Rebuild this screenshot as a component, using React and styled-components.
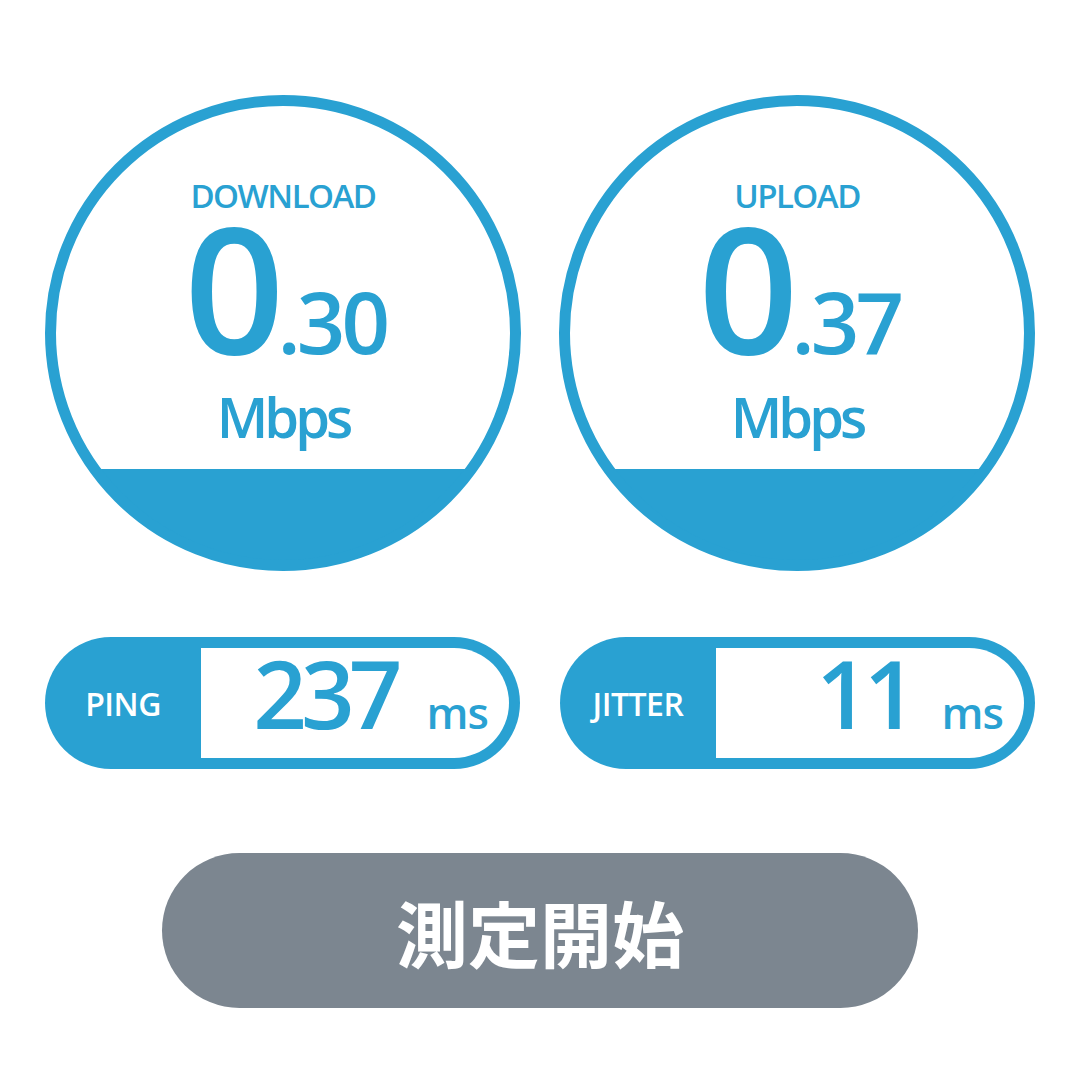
import styled, { createGlobalStyle } from "styled-components";

const BLUE = "#29a1d2";

const GlobalStyle = createGlobalStyle`
    html, body {
        margin: 0;
        padding: 0;
        background: #ffffff;
        font-family: "Open Sans", "Noto Sans", sans-serif;
    }
`;

const gauges = [
    { label: "DOWNLOAD", whole: "0", fraction: ".30" },
    { label: "UPLOAD", whole: "0", fraction: ".37" },
];

const stats = [
    { label: "PING", value: "237" },
    { label: "JITTER", value: "11" },
];

const App = () => {
    return (
        <>
            <GlobalStyle />
            <S.Page>
                <S.Row>
                    {gauges.map((g) => (
                        <S.Gauge key={g.label}>
                            <S.GaugeLabel>{g.label}</S.GaugeLabel>
                            <S.Speed>
                                <S.Whole>{g.whole}</S.Whole>
                                <S.Fraction>{g.fraction}</S.Fraction>
                            </S.Speed>
                            <S.Unit>Mbps</S.Unit>
                        </S.Gauge>
                    ))}
                </S.Row>

                <S.Row>
                    {stats.map((s) => (
                        <S.Stat key={s.label}>
                            <S.StatLabel>{s.label}</S.StatLabel>
                            <S.StatBox>
                                <S.StatValue>{s.value}</S.StatValue>
                                <S.StatUnit>ms</S.StatUnit>
                            </S.StatBox>
                        </S.Stat>
                    ))}
                </S.Row>

                <S.StartButton>測定開始</S.StartButton>
            </S.Page>
        </>
    );
};

export default App;

const S = {
    Page: styled.div`
        width: 1080px;
        height: 1080px;
        overflow: hidden;
        padding: 95px 45px 0 45px;
        box-sizing: border-box;
        display: flex;
        flex-direction: column;
        align-items: center;
    `,

    Row: styled.div`
        width: 100%;
        display: flex;
        justify-content: space-between;
        margin-bottom: 66px;
    `,

    Gauge: styled.div`
        width: 476px;
        height: 476px;
        box-sizing: border-box;
        border: 11px solid ${BLUE};
        border-radius: 50%;
        background: linear-gradient(to bottom, #ffffff 363px, ${BLUE} 363px);
        display: flex;
        flex-direction: column;
        align-items: center;
        padding-top: 73px;
        color: ${BLUE};
    `,

    GaugeLabel: styled.div`
        font-size: 33px;
        font-weight: 600;
        line-height: 33px;
        letter-spacing: -1.5px;
    `,

    Speed: styled.div`
        display: flex;
        align-items: baseline;
        line-height: 0.75;
        margin-top: 8px;
        padding-left: 4px;
    `,

    Whole: styled.span`
        font-size: 176px;
        font-weight: 600;
        letter-spacing: -7px;
    `,

    Fraction: styled.span`
        font-size: 85px;
        font-weight: 600;
        letter-spacing: -4px;
    `,

    Unit: styled.div`
        font-size: 56px;
        font-weight: 600;
        line-height: 1;
        letter-spacing: -4px;
        margin-top: 34px;
    `,

    Stat: styled.div`
        width: 475px;
        height: 132px;
        box-sizing: border-box;
        border-radius: 66px;
        background: ${BLUE};
        padding: 11px 11px 11px 0;
        display: flex;
    `,

    StatLabel: styled.div`
        width: 156px;
        flex: none;
        display: flex;
        align-items: center;
        justify-content: center;
        color: #ffffff;
        font-size: 32px;
        font-weight: 600;
        letter-spacing: -0.5px;
    `,

    StatBox: styled.div`
        flex: 1;
        background: #ffffff;
        border-radius: 0 55px 55px 0;
        display: flex;
        align-items: baseline;
        justify-content: flex-end;
        padding: 0 21px 0 0;
        color: ${BLUE};
    `,

    StatValue: styled.span`
        font-size: 94px;
        font-weight: 600;
        line-height: 91px;
        letter-spacing: -6px;
    `,

    StatUnit: styled.span`
        font-size: 44px;
        font-weight: 600;
        line-height: 1;
        letter-spacing: -1px;
        margin-left: 30px;
    `,

    StartButton: styled.button`
        width: 756px;
        height: 155px;
        margin-top: 18px;
        border: none;
        border-radius: 78px;
        background: #7c8690;
        color: #ffffff;
        font-family: "Noto Sans CJK JP", "Noto Sans", sans-serif;
        font-size: 72px;
        font-weight: 700;
        cursor: pointer;
    `,
};
